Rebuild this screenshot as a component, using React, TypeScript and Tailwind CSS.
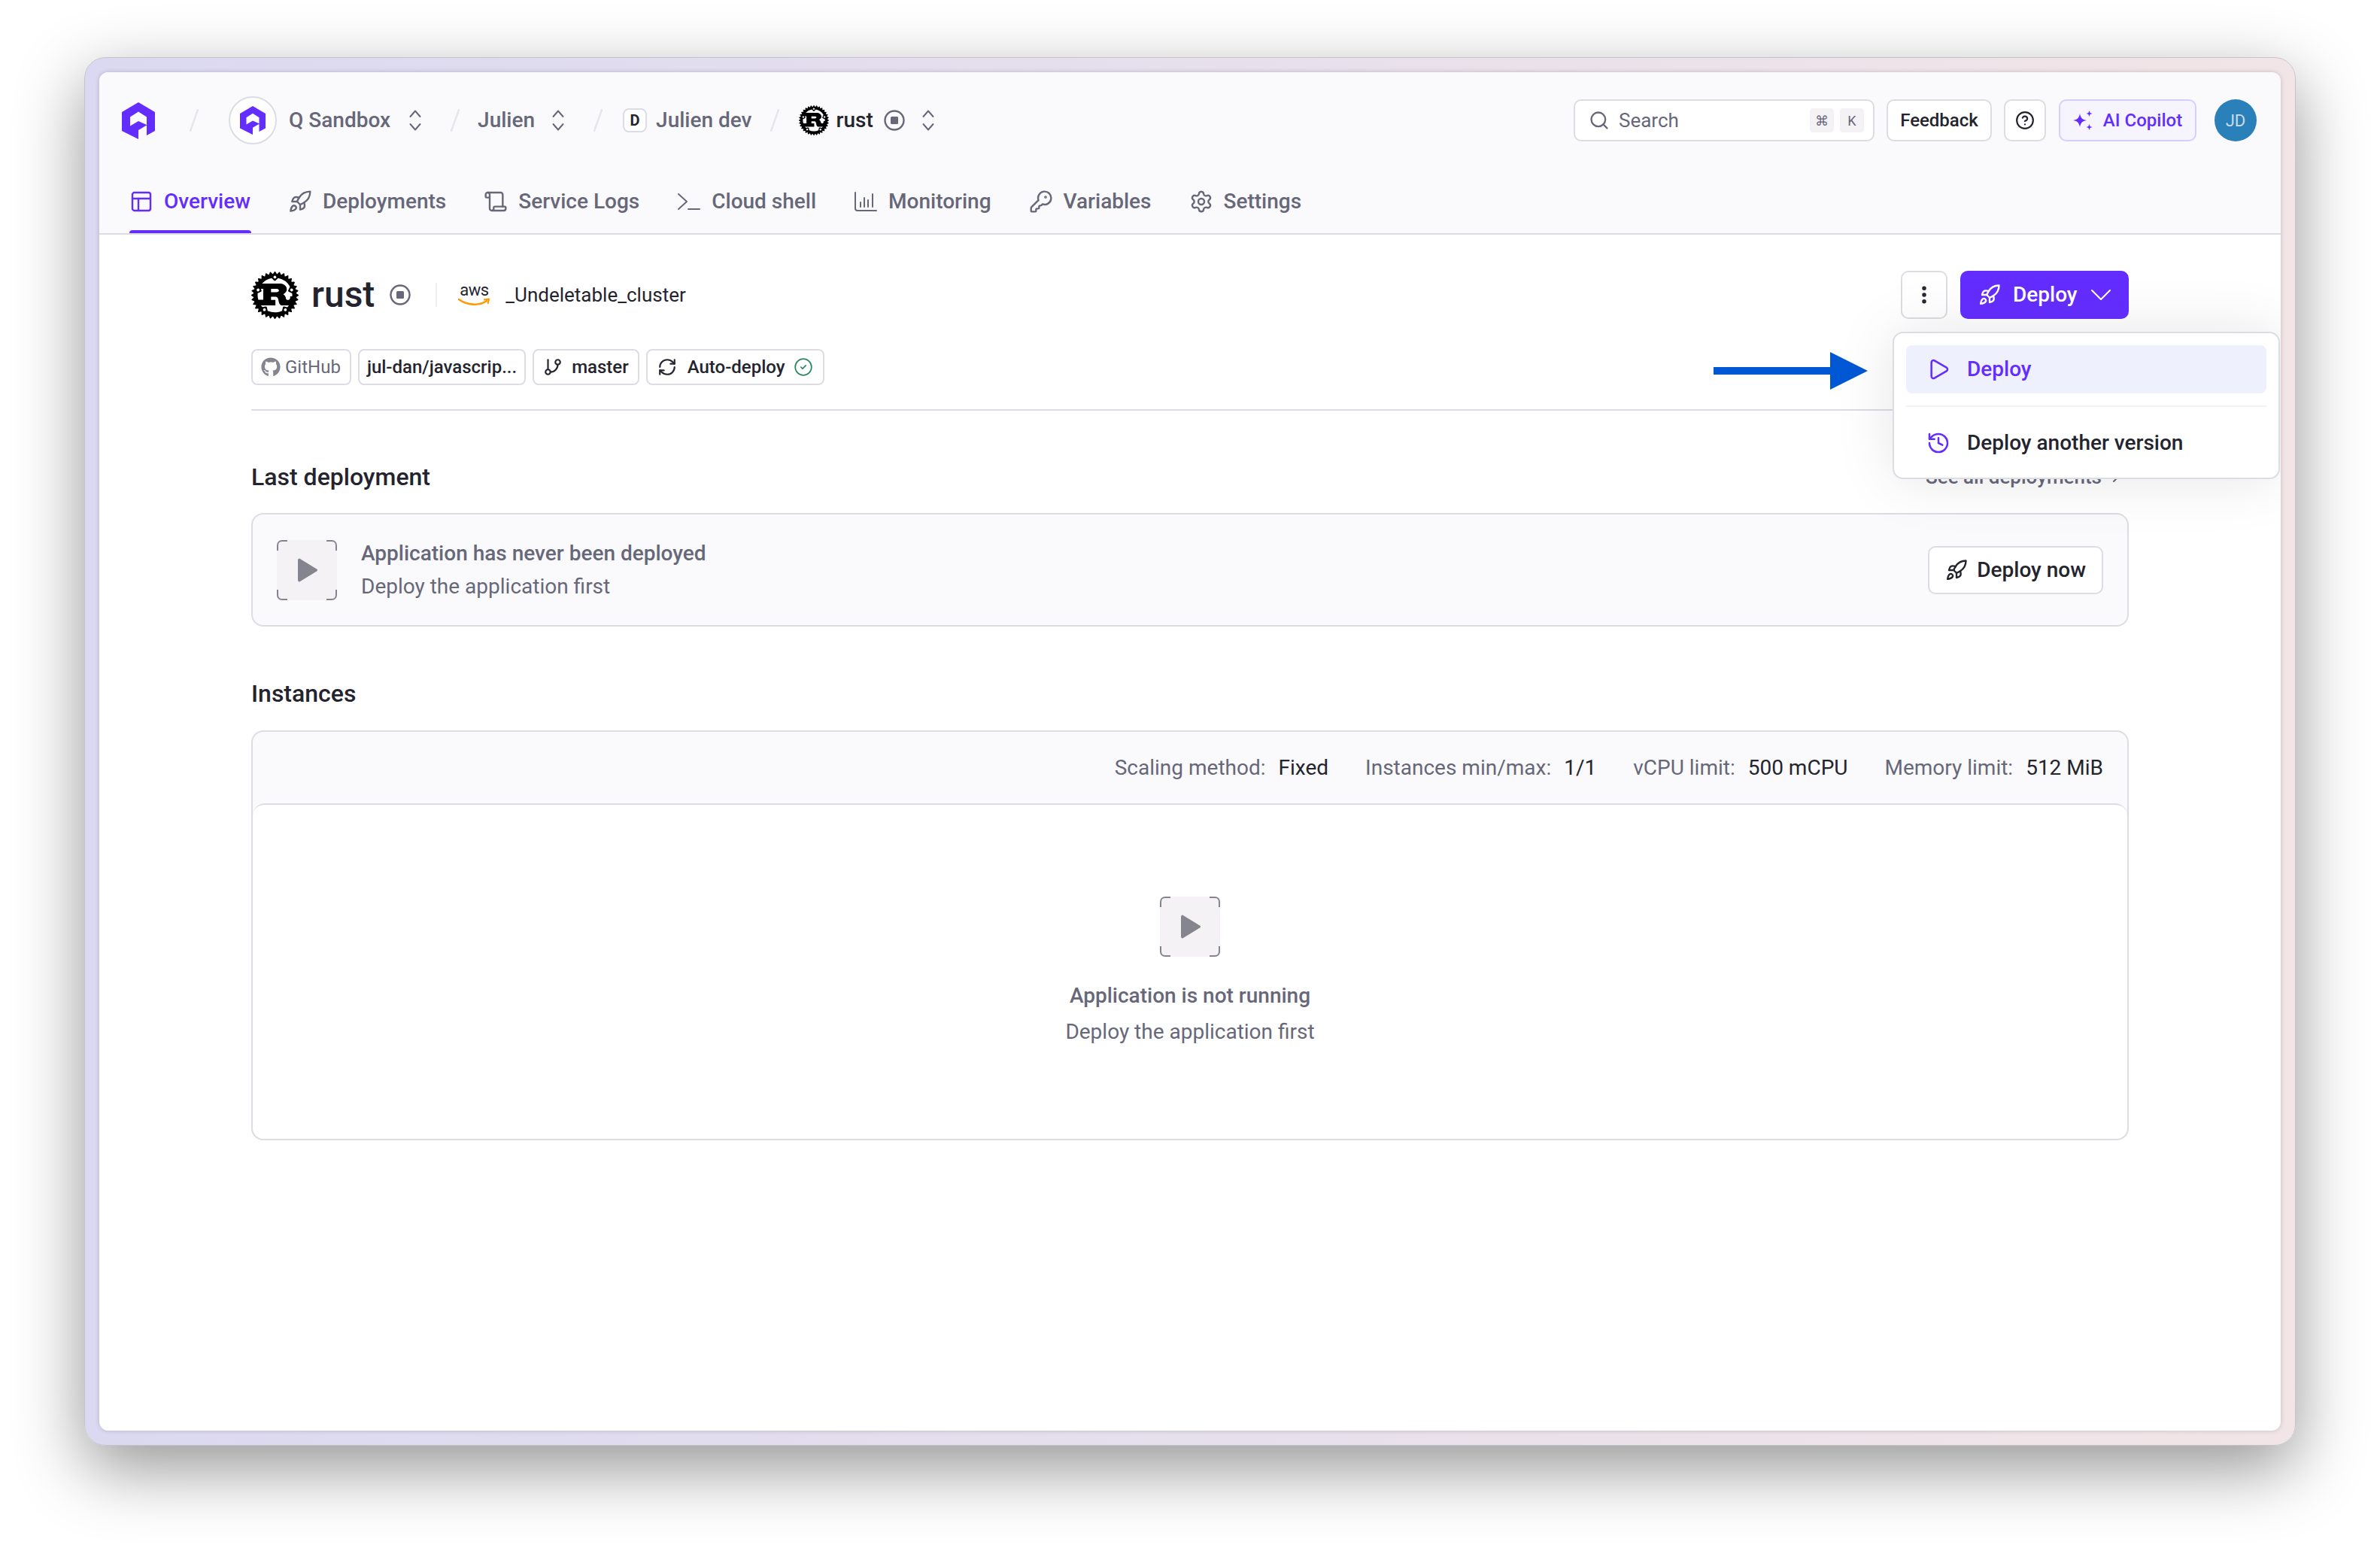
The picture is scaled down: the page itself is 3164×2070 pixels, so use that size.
import { ReactNode } from 'react'
import {
  ChevronRight,
  CircleCheck,
  CircleHelp,
  EllipsisVertical,
  GitBranch,
  History,
  KeyRound,
  PanelsTopLeft,
  Play,
  RefreshCw,
  Rocket,
  Scroll,
  Search,
  Settings,
} from 'lucide-react'
import { FaGithub } from 'react-icons/fa'
import { SiRust } from 'react-icons/si'

const QoveryLogo = ({ className }: { className: string }) => (
  <svg viewBox="0 0 44 49" className={className} fill="#642DFF">
    <path
      fillRule="evenodd"
      d="M22 0L44 13V38L33 44V30.5L22 37V49L0 38V13ZM11 19.5L22 12.5L33 19.5V30L22 25L11 31.5Z"
    />
  </svg>
)

const Slash = ({ className = '' }: { className?: string }) => (
  <svg viewBox="0 0 12 30" className={`w-[12px] h-[30px] shrink-0 ${className}`}>
    <path d="M11 1L1 29" stroke="#e5e5ea" strokeWidth="2.4" strokeLinecap="round" />
  </svg>
)

const UpDown = ({ className = '' }: { className?: string }) => (
  <svg viewBox="0 0 18 30" className={`w-[18px] h-[30px] shrink-0 ${className}`} fill="none">
    <path
      d="M2.5 10L9 2.5L15.5 10M2.5 20L9 27.5L15.5 20"
      stroke="#67677a"
      strokeWidth="2"
      strokeLinecap="round"
      strokeLinejoin="round"
    />
  </svg>
)

const StopIcon = ({ className }: { className: string }) => (
  <svg viewBox="0 0 28 28" className={className} fill="none">
    <circle cx="14" cy="14" r="12.5" stroke="#67677a" strokeWidth="2.4" />
    <rect x="9" y="9" width="10" height="10" rx="1.5" fill="#67677a" />
  </svg>
)

const TerminalIcon = () => (
  <svg viewBox="0 0 32 32" className="w-[32px] h-[32px] shrink-0" fill="none" stroke="#67677a" strokeWidth="2" strokeLinecap="round" strokeLinejoin="round">
    <path d="M2 6L13 16L2 26M15 26H30" />
  </svg>
)

const MonitoringIcon = () => (
  <svg viewBox="0 0 32 32" className="w-[32px] h-[32px] shrink-0" fill="none" stroke="#67677a" strokeWidth="2" strokeLinecap="round">
    <path d="M2 4V25C2 27 3 28 5 28H30" />
    <path d="M9 17V23M14 11V23M19 14V23M25 6V23" />
  </svg>
)

const SparkIcon = () => (
  <svg viewBox="0 0 26 26" className="w-[26px] h-[26px] shrink-0" fill="#642DFF">
    <path d="M9 4C10 9.5 12 12 18 13C12 14 10 16.5 9 22C8 16.5 6 14 0 13C6 12 8 9.5 9 4Z" />
    <path d="M21.5 0L22.6 2.9L25.5 4L22.6 5.1L21.5 8L20.4 5.1L17.5 4L20.4 2.9Z" />
    <path d="M21.5 18L22.6 20.9L25.5 22L22.6 23.1L21.5 26L20.4 23.1L17.5 22L20.4 20.9Z" />
  </svg>
)

const AwsLogo = () => (
  <span className="flex flex-col items-center w-[42px] shrink-0">
    <span className="text-[22px] leading-[20px] text-[#24242f] tracking-[-0.5px]">aws</span>
    <svg viewBox="0 0 42 12" className="w-[42px] h-[12px]" fill="none">
      <path d="M1 2C12 10 28 11 38 4" stroke="#f90" strokeWidth="2.6" strokeLinecap="round" />
      <path d="M34 2.5L41 1.5L39.5 8" stroke="#f90" strokeWidth="2" strokeLinejoin="round" />
    </svg>
  </span>
)

const PlaceholderIcon = ({ className }: { className: string }) => (
  <svg viewBox="0 0 80 80" className={className} fill="none">
    <rect width="80" height="80" rx="6" fill="#f4f2f5" />
    <path
      d="M1 14V7C1 3.5 3.5 1 7 1H14M66 1H73C76.5 1 79 3.5 79 7V14M79 66V73C79 76.5 76.5 79 73 79H66M14 79H7C3.5 79 1 76.5 1 73V66"
      stroke="#85858f"
      strokeWidth="2"
    />
    <path
      d="M28 27C28 25 29.5 24 31 25L53 38.5C54.5 39.3 54.5 40.7 53 41.5L31 55C29.5 56 28 55 28 53Z"
      fill="#85858f"
    />
  </svg>
)

const Tab = ({
  icon,
  label,
  active = false,
}: {
  icon: ReactNode
  label: string
  active?: boolean
}) => (
  <div
    className={`relative flex items-center gap-[14px] h-full pt-[2px] text-[28px] font-medium ${
      active ? 'text-[#642dff]' : 'text-[#67677a]'
    }`}>
    {icon}
    <span>{label}</span>
    {active && (
      <span className="absolute left-0 -right-[1px] bottom-0 h-[4px] rounded-t-[4px] bg-[#642dff]" />
    )}
  </div>
)

const Tag = ({ children, className = 'px-[12px] gap-[10px]' }: { children: ReactNode; className?: string }) => (
  <div
    className={`flex items-center h-[48px] bg-white border-2 border-[#dcdce3] rounded-[8px] text-[24px] font-medium text-[#24242f] whitespace-nowrap ${className}`}>
    {children}
  </div>
)

const Stat = ({ label, value }: { label: string; value: string }) => (
  <div className="flex items-center gap-[17px] whitespace-nowrap">
    <span className="text-[#67677a]">{label}</span>
    <span className="text-[#24242f]">{value}</span>
  </div>
)

export default function App() {
  const tabIcon = 'w-[32px] h-[32px] shrink-0'

  return (
    <div className="w-[3164px] h-[2070px] overflow-hidden bg-white pt-[76px] pl-[112px] [font-family:Roboto,sans-serif]">
      <div className="w-[2940px] h-[1846px] p-[19px] rounded-[28px] bg-gradient-to-r from-[#dbd9f1] to-[#f2e5e7] border border-[#c4c4c8] shadow-[0_30px_90px_rgba(0,0,0,0.42)]">
        <div className="relative w-full h-full bg-white rounded-[12px] overflow-hidden shadow-[0_0_6px_rgba(0,0,0,0.18)]">
          <header className="h-[216px] bg-[#fafafc] border-b-2 border-[#dcdce3]">
            <div className="flex items-center h-[128px] pl-[30px] pr-[32px]">
              <QoveryLogo className="w-[44px] h-[49px] shrink-0" />
              <Slash className="ml-[46px]" />
              <div className="ml-[40px] flex items-center justify-center w-[64px] h-[64px] shrink-0 rounded-full border-2 border-[#dcdce3] bg-white">
                <QoveryLogo className="w-[34px] h-[38px]" />
              </div>
              <span className="ml-[16px] text-[28px] font-medium text-[#67677a] whitespace-nowrap">Q Sandbox</span>
              <UpDown className="ml-[24px]" />
              <Slash className="ml-[38px]" />
              <span className="ml-[24px] text-[28px] font-medium text-[#67677a]">Julien</span>
              <UpDown className="ml-[22px]" />
              <Slash className="ml-[38px]" />
              <div className="ml-[27px] flex items-center justify-center w-[32px] h-[32px] shrink-0 rounded-[8px] border-2 border-[#dcdce3] bg-white text-[20px] font-bold text-[#24242f]">
                D
              </div>
              <span className="ml-[12px] text-[28px] font-medium text-[#67677a] whitespace-nowrap">Julien dev</span>
              <Slash className="ml-[24px]" />
              <SiRust className="ml-[26px] w-[40px] h-[40px] shrink-0 text-black" />
              <span className="ml-[10px] text-[28px] font-medium text-[#24242f]">rust</span>
              <StopIcon className="ml-[14px] w-[28px] h-[28px] shrink-0" />
              <UpDown className="ml-[22px]" />

              <div className="flex items-center ml-auto">
                <div className="flex items-center w-[400px] h-[56px] pl-[18px] pr-[12px] bg-white border-2 border-[#dcdce3] rounded-[10px]">
                  <Search className="w-[28px] h-[28px] text-[#67677a]" strokeWidth={2} />
                  <span className="ml-[12px] text-[26px] text-[#67677a]">Search</span>
                  <div className="flex gap-[8px] ml-auto">
                    <span className="flex items-center justify-center w-[32px] h-[32px] rounded-[4px] bg-[#f4f2f5] text-[18px] text-[#67677a]">⌘</span>
                    <span className="flex items-center justify-center w-[32px] h-[32px] rounded-[4px] bg-[#f4f2f5] text-[18px] text-[#67677a]">K</span>
                  </div>
                </div>
                <div className="flex items-center justify-center ml-[16px] w-[140px] h-[56px] bg-white border-2 border-[#dcdce3] rounded-[10px] text-[24px] font-medium text-[#24242f]">
                  Feedback
                </div>
                <div className="flex items-center justify-center ml-[16px] w-[56px] h-[56px] bg-white border-2 border-[#dcdce3] rounded-[10px]">
                  <CircleHelp className="w-[26px] h-[26px] text-[#24242f]" strokeWidth={2} />
                </div>
                <div className="flex items-center justify-center gap-[14px] ml-[17px] w-[183px] h-[56px] bg-[#f5f4ff] border-2 border-[#d3d0fb] rounded-[10px] text-[24px] font-medium text-[#642dff]">
                  <SparkIcon />
                  <span>AI Copilot</span>
                </div>
                <div className="flex items-center justify-center ml-[24px] w-[56px] h-[56px] rounded-full bg-[#2a80b9] text-[22px] text-[#c9dcec]">
                  JD
                </div>
              </div>
            </div>

            <nav className="flex items-center gap-[50px] h-[86px] pl-[40px]">
              <Tab active label="Overview" icon={<PanelsTopLeft className={tabIcon} strokeWidth={1.8} />} />
              <Tab label="Deployments" icon={<Rocket className={tabIcon} strokeWidth={1.8} />} />
              <Tab label="Service Logs" icon={<Scroll className={tabIcon} strokeWidth={1.8} />} />
              <Tab label="Cloud shell" icon={<TerminalIcon />} />
              <Tab label="Monitoring" icon={<MonitoringIcon />} />
              <Tab label="Variables" icon={<KeyRound className={tabIcon} strokeWidth={1.8} />} />
              <Tab label="Settings" icon={<Settings className={tabIcon} strokeWidth={1.8} />} />
            </nav>
          </header>

          <main className="px-[202px] pt-[48px]">
            <div className="flex items-center h-[64px]">
              <SiRust className="w-[63px] h-[63px] shrink-0 text-black" />
              <span className="ml-[17px] text-[48px] font-medium text-[#24242f] leading-none">rust</span>
              <StopIcon className="ml-[20px] w-[28px] h-[28px] shrink-0" />
              <div className="ml-[33px] w-[2px] h-[32px] bg-[#f0f0f3]" />
              <div className="ml-[28px] flex items-center gap-[21px]">
                <AwsLogo />
                <span className="text-[26px] text-[#24242f]">_Undeletable_cluster</span>
              </div>

              <div className="flex items-center gap-[17px] ml-auto">
                <div className="flex items-center justify-center w-[62px] h-[64px] bg-white border-2 border-[#dcdce3] rounded-[10px]">
                  <EllipsisVertical className="w-[30px] h-[30px] text-[#24242f]" strokeWidth={2.4} />
                </div>
                <div className="flex items-center gap-[16px] w-[224px] h-[64px] pl-[24px] rounded-[10px] bg-[#642dff] text-[28px] font-medium text-white">
                  <Rocket className="w-[30px] h-[30px]" strokeWidth={1.9} />
                  <span>Deploy</span>
                  <svg viewBox="0 0 26 14" className="ml-[2px] w-[26px] h-[14px]" fill="none" stroke="white" strokeWidth="2" strokeLinecap="round" strokeLinejoin="round">
                    <path d="M1 1L13 13L25 1" />
                  </svg>
                </div>
              </div>
            </div>

            <div className="flex items-center gap-[9px] mt-[40px]">
              <Tag>
                <FaGithub className="w-[26px] h-[26px] -ml-[1px] -mr-[4px] text-[#85858f]" />
                <span className="font-normal text-[#67677a]">GitHub</span>
              </Tag>
              <Tag className="px-[10px]">jul-dan/javascrip...</Tag>
              <Tag className="px-[12px] gap-[12px]">
                <GitBranch className="w-[26px] h-[26px]" strokeWidth={2} />
                master
              </Tag>
              <Tag className="px-[13px] gap-[12px]">
                <RefreshCw className="w-[26px] h-[26px] mr-[2px]" strokeWidth={2} />
                Auto-deploy
                <CircleCheck className="w-[26px] h-[26px] text-[#2b8a5f]" strokeWidth={1.6} />
              </Tag>
            </div>

            <div className="mt-[32px] h-[2px] bg-[#dcdce3]" />

            <div className="flex items-center justify-between h-[48px] mt-[64px]">
              <h2 className="text-[32px] font-medium text-[#24242f]">Last deployment</h2>
              <div className="flex items-center gap-[7px] mr-[5px] text-[26px] font-medium text-[#67677a]">
                See all deployments
                <ChevronRight className="w-[24px] h-[24px]" strokeWidth={2} />
              </div>
            </div>

            <div className="flex items-center h-[151px] mt-[24px] pl-[32px] pr-[32px] bg-[#fafafc] border-2 border-[#dcdce3] rounded-[16px]">
              <PlaceholderIcon className="w-[80px] h-[80px] shrink-0" />
              <div className="ml-[32px] flex flex-col gap-[4px]">
                <span className="text-[28px] leading-[40px] font-medium text-[#67677a]">Application has never been deployed</span>
                <span className="text-[28px] leading-[40px] text-[#67677a]">Deploy the application first</span>
              </div>
              <div className="flex items-center gap-[12px] ml-auto h-[64px] px-[21px] bg-white border-2 border-[#dcdce3] rounded-[10px] text-[28px] font-medium text-[#24242f]">
                <Rocket className="w-[30px] h-[30px]" strokeWidth={1.9} />
                Deploy now
              </div>
            </div>

            <h2 className="flex items-center h-[48px] mt-[65px] text-[32px] font-medium text-[#24242f]">Instances</h2>

            <div className="h-[545px] mt-[25px] bg-[#fafafc] border-2 border-[#dcdce3] rounded-[16px]">
              <div className="flex items-center justify-end gap-[49px] h-[95px] pr-[32px] text-[28px]">
                <Stat label="Scaling method:" value="Fixed" />
                <Stat label="Instances min/max:" value="1/1" />
                <Stat label="vCPU limit:" value="500 mCPU" />
                <Stat label="Memory limit:" value="512 MiB" />
              </div>
              <div className="flex flex-col items-center h-[446px] pt-[122px] bg-white border-t-2 border-[#dcdce3] rounded-[16px]">
                <PlaceholderIcon className="w-[80px] h-[80px]" />
                <span className="mt-[32px] text-[28px] leading-[40px] font-medium text-[#67677a]">Application is not running</span>
                <span className="mt-[8px] text-[28px] leading-[40px] text-[#67677a]">Deploy the application first</span>
              </div>
            </div>
          </main>

          <svg viewBox="0 0 205 50" className="absolute left-[2146px] top-[372px] w-[205px] h-[50px]">
            <path d="M0 20H155V0L205 25L155 50V30H0Z" fill="#0057d4" />
          </svg>

          <div className="absolute left-[2384px] top-[345px] w-[515px] h-[196px] p-[16px] bg-white border-2 border-[#dcdce3] rounded-[14px] shadow-[0_0_80px_rgba(0,0,0,0.1)]">
            <div className="flex items-center gap-[22px] h-[64px] pl-[27px] rounded-[8px] bg-[#eff0fd] text-[28px] font-medium text-[#642dff]">
              <Play className="w-[32px] h-[32px]" strokeWidth={1.9} />
              Deploy
            </div>
            <div className="h-[2px] my-[16px] bg-[#f4f2f5]" />
            <div className="flex items-center gap-[22px] h-[64px] pl-[27px] text-[28px] font-medium text-[#24242f]">
              <History className="w-[32px] h-[32px] text-[#642dff]" strokeWidth={1.9} />
              Deploy another version
            </div>
          </div>
        </div>
      </div>
    </div>
  )
}
